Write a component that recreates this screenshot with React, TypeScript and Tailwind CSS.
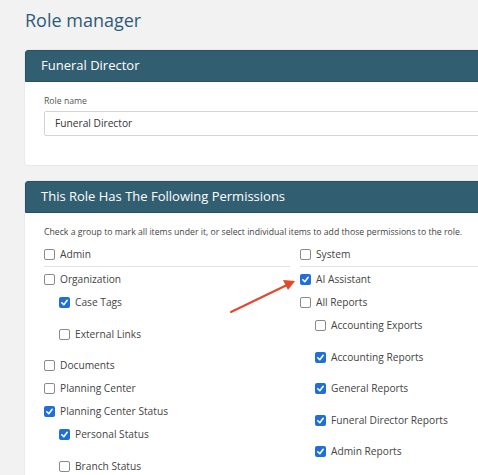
import React from "react";

type Item = { label: string; checked?: boolean; sub?: boolean };

function Box({ checked }: { checked?: boolean }) {
  if (checked) {
    return (
      <span className="mt-[2px] flex h-[11px] w-[11px] shrink-0 items-center justify-center rounded-[2px] bg-[#1f6fd6]">
        <svg width="9" height="9" viewBox="0 0 10 10">
          <path d="M2 5.3 L4.2 7.4 L8 2.6" fill="none" stroke="#fff" strokeWidth="1.8" strokeLinecap="round" strokeLinejoin="round" />
        </svg>
      </span>
    );
  }
  return <span className="mt-[2px] h-[11px] w-[11px] shrink-0 rounded-[2px] border border-[#8a8a8a] bg-white" />;
}

function Row({ item }: { item: Item }) {
  return (
    <div className={`flex items-start gap-[5px] ${item.sub ? "h-[31.5px] pl-[15px]" : "h-[23px]"}`}>
      <Box checked={item.checked} />
      <span className="text-[10.2px] leading-[14px] text-[#444]">{item.label}</span>
    </div>
  );
}

const left: Item[] = [
  { label: "Organization" },
  { label: "Case Tags", checked: true, sub: true },
  { label: "External Links", sub: true },
  { label: "Documents" },
  { label: "Planning Center" },
  { label: "Planning Center Status", checked: true },
  { label: "Personal Status", checked: true, sub: true },
  { label: "Branch Status", sub: true },
];

const right: Item[] = [
  { label: "AI Assistant", checked: true },
  { label: "All Reports" },
  { label: "Accounting Exports", sub: true },
  { label: "Accounting Reports", checked: true, sub: true },
  { label: "General Reports", checked: true, sub: true },
  { label: "Funeral Director Reports", checked: true, sub: true },
  { label: "Admin Reports", checked: true, sub: true },
];

export default function App() {
  return (
    <div
      className="relative h-[475px] w-[478px] overflow-hidden bg-[#f2f2f2]"
      style={{ fontFamily: '"Open Sans", "Liberation Sans", sans-serif' }}
    >
      <div className="pl-[25px] pt-[6px]">
        <h1 className="h-[44px] text-[18px] leading-[28px] text-[#2f5b78]">Role manager</h1>

        <div className="w-[520px] rounded-[3px] bg-white shadow-[0_0_2px_rgba(0,0,0,0.12)]">
          <div className="flex h-[32px] items-center rounded-t-[3px] border border-[#29505f] bg-[#325e72] pl-[15px] text-[13px] text-white">
            Funeral Director
          </div>
          <div className="h-[83px] pl-[19px] pt-[12px]">
            <div className="text-[8.7px] leading-[14px] text-[#555]">Role name</div>
            <div className="mt-[3px] flex h-[25px] items-center rounded-[2px] border border-[#d4d4d4] pl-[10px] text-[10.2px] text-[#333]">
              Funeral Director
            </div>
          </div>
        </div>

        <div className="mt-[16px] w-[520px] rounded-[3px] bg-white shadow-[0_0_2px_rgba(0,0,0,0.12)]">
          <div className="flex h-[32px] items-center rounded-t-[3px] border border-[#29505f] bg-[#325e72] pl-[15px] text-[13px] text-white">
            This Role Has The Following Permissions
          </div>
          <div className="pl-[19px] pt-[12px]">
            <div className="text-[8.7px] leading-[14px] text-[#444]">
              Check a group to mark all items under it, or select individual items to add those permissions to the role.
            </div>
            <div className="mt-[8px] flex gap-[10px]">
              <div className="w-[246px]">
                <div className="mb-[5px] flex h-[20px] items-start gap-[5px] border-b border-[#e2e2e2]">
                  <Box />
                  <span className="text-[10.2px] leading-[14px] text-[#444]">Admin</span>
                </div>
                {left.map((it) => (
                  <Row key={it.label} item={it} />
                ))}
              </div>
              <div className="flex-1">
                <div className="mb-[5px] flex h-[20px] items-start gap-[5px] border-b border-[#e2e2e2]">
                  <Box />
                  <span className="text-[10.2px] leading-[14px] text-[#444]">System</span>
                </div>
                {right.map((it) => (
                  <Row key={it.label} item={it} />
                ))}
              </div>
            </div>
          </div>
        </div>
      </div>

      <svg className="absolute left-0 top-0" width="478" height="475" viewBox="0 0 478 475">
        <line x1="231" y1="312" x2="287" y2="285" stroke="#e2472b" strokeWidth="2" strokeLinecap="round" />
        <polygon points="295,281 283,280 288,290" fill="#e2472b" />
      </svg>
    </div>
  );
}
